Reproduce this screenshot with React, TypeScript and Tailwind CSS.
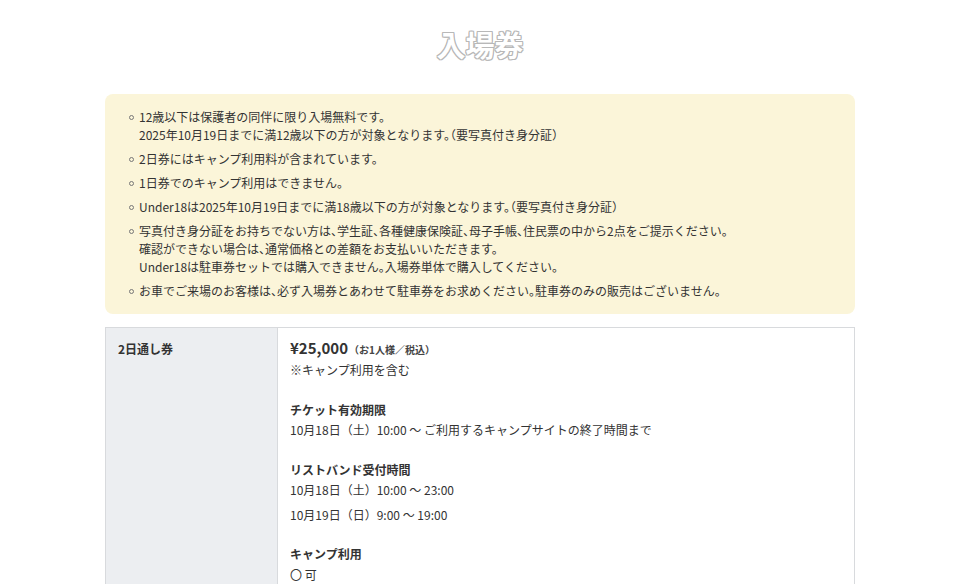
import React from "react";

const FONT = "[font-family:'Noto_Sans_CJK_JP','Noto_Sans',sans-serif]";

const notes: string[][] = [
  ["12歳以下は保護者の同伴に限り入場無料です。", "2025年10月19日までに満12歳以下の方が対象となります。（要写真付き身分証）"],
  ["2日券にはキャンプ利用料が含まれています。"],
  ["1日券でのキャンプ利用はできません。"],
  ["Under18は2025年10月19日までに満18歳以下の方が対象となります。（要写真付き身分証）"],
  [
    "写真付き身分証をお持ちでない方は、学生証、各種健康保険証、母子手帳、住民票の中から2点をご提示ください。",
    "確認ができない場合は、通常価格との差額をお支払いいただきます。",
    "Under18は駐車券セットでは購入できません。入場券単体で購入してください。",
  ],
  ["お車でご来場のお客様は、必ず入場券とあわせて駐車券をお求めください。駐車券のみの販売はございません。"],
];

export default function App() {
  return (
    <div className={`min-h-[584px] bg-white text-[#333] ${FONT}`}>
      <div className="mx-auto w-[750px] pt-[24px]">
        <h1 className="text-center text-[29px] leading-[40px] font-bold text-white [text-shadow:1px_0_0_#b8b8b8,-1px_0_0_#b8b8b8,0_1px_0_#b8b8b8,0_-1px_0_#b8b8b8,1px_1px_0_#b8b8b8,-1px_-1px_0_#b8b8b8,1px_-1px_0_#b8b8b8,-1px_1px_0_#b8b8b8]">
          入場券
        </h1>

        <div className="mt-[30px] rounded-[8px] bg-[#fbf5d9] pt-[14px] pb-[14px] pl-[24px] pr-[16px]">
          <ul className="flex flex-col gap-[6px] text-[12px] leading-[18px] [font-feature-settings:'halt']">
            {notes.map((lines, i) => (
              <li key={i} className="flex gap-[5px]">
                <span className="mt-[7px] h-[5px] w-[5px] shrink-0 rounded-full border border-[#777]" />
                <div className="flex flex-col">
                  {lines.map((l, j) => (
                    <span key={j}>{l}</span>
                  ))}
                </div>
              </li>
            ))}
          </ul>
        </div>

        <div className="mt-[13px] flex border border-[#d8dadd] text-[12px] leading-[20px]">
          <div className="w-[172px] shrink-0 border-r border-[#d8dadd] bg-[#eceef1] px-[12px] pt-[11px] font-bold">
            2日通し券
          </div>
          <div className="flex-1 px-[12px] pt-[10px] pb-[20px]">
            <p className="flex h-[20px] items-baseline">
              <span className="text-[15px] leading-[20px] font-bold">¥25,000</span>
              <span className="ml-[1px] text-[10px] leading-[20px] font-bold text-[#444]">（お1人様／税込）</span>
            </p>
            <p className="mt-[2px]">※キャンプ利用を含む</p>

            <div className="mt-[20px]">
              <p className="font-bold">チケット有効期限</p>
              <p>10月18日（土）10:00 〜 ご利用するキャンプサイトの終了時間まで</p>
            </div>

            <div className="mt-[20px]">
              <p className="font-bold">リストバンド受付時間</p>
              <p>10月18日（土）10:00 〜 23:00</p>
              <p className="mt-[5px]">10月19日（日）9:00 〜 19:00</p>
            </div>

            <div className="mt-[19px]">
              <p className="font-bold">キャンプ利用</p>
              <p className="mt-[1px]">〇 可</p>
            </div>
          </div>
        </div>
      </div>
    </div>
  );
}
